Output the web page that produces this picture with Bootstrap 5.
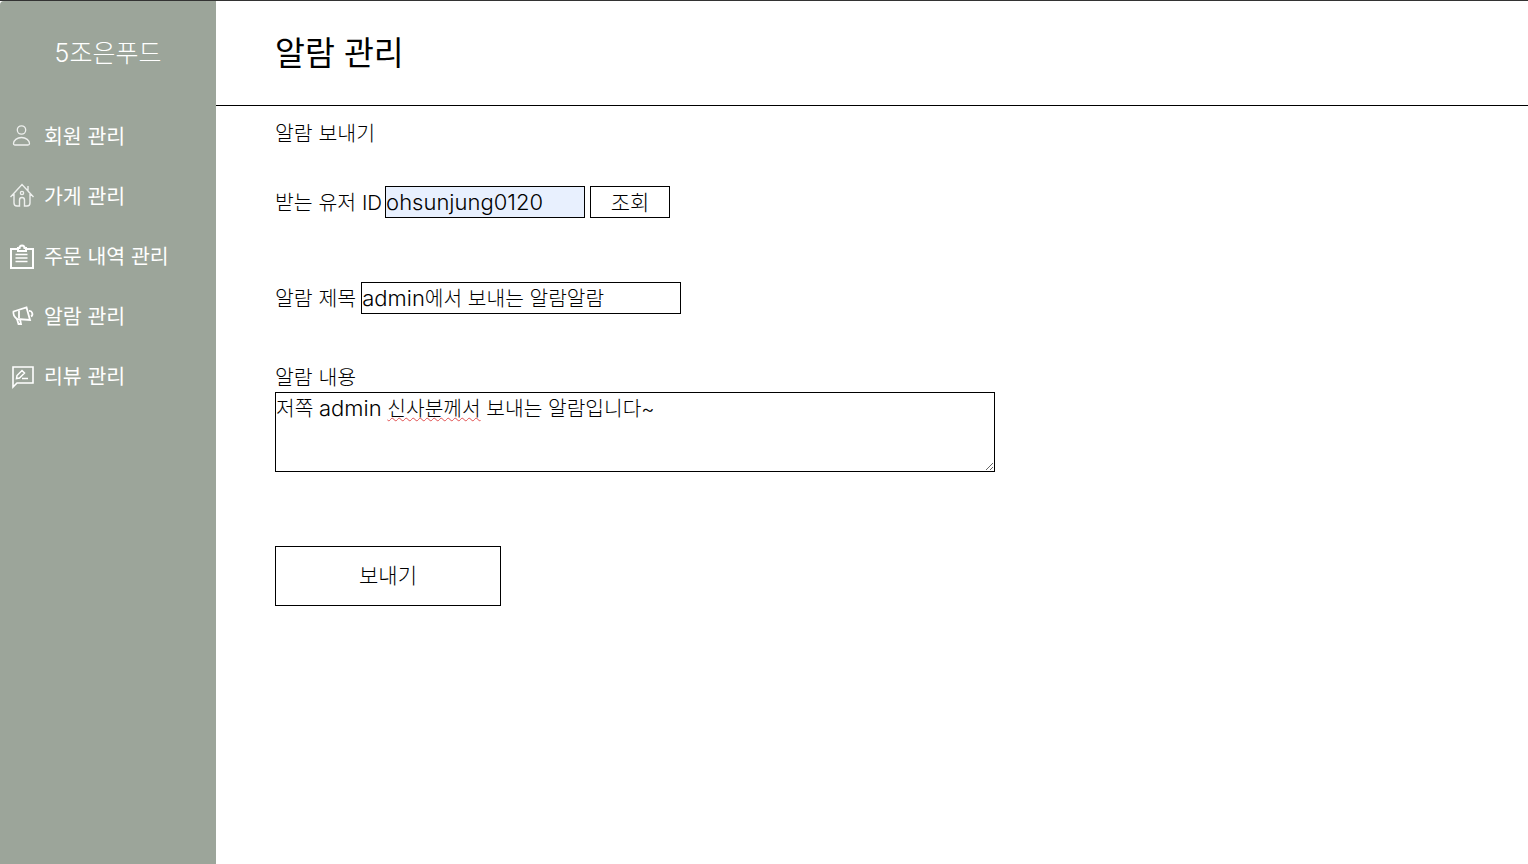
<!DOCTYPE html>
<html lang="ko">
<head>
<meta charset="utf-8">
<title>알람 관리</title>
<link href="https://cdn.jsdelivr.net/npm/bootstrap@5.3.0/dist/css/bootstrap.min.css" rel="stylesheet">
<style>
html,body{height:100%}
body{font-family:Inter,"Noto Sans CJK KR",sans-serif;color:#000;background:#fff;border-top:1px solid #333;overflow:hidden}
.app-shell{height:863px}
.side-panel{width:216px;background:#9ca59a;color:#fff;border-top-left-radius:4px;flex:none}
.brand-name{height:104px;font-size:25px;font-weight:300;line-height:104px;text-align:center}
.side-item{height:60px;font-size:20.5px;font-weight:400;padding-left:10px;gap:10px;color:#fff;text-decoration:none}
.side-item svg{width:24px;height:24px;flex:none;overflow:visible}
.side-text{padding-top:4px}
.top-head{height:105px;border-bottom:1px solid #000;padding-left:59px}
.top-head h1{font-size:32.5px;font-weight:400;margin:0}
.main-body{padding-left:59px}
.sec-title{font-size:20.5px;font-weight:300;line-height:24px;margin-top:16px}
.field-label{font-size:20.5px;font-weight:300;line-height:24px;padding-top:2px;margin-right:5px}
.label-tight{margin-right:3px}
.block-label{display:block;line-height:28px;padding-top:0;margin-top:50px;margin-right:0}
.plain-field{border:1px solid #000;border-radius:0;font-size:20.3px;font-weight:300;line-height:30px;height:32px;padding:0;color:#000;outline:0;background:#fff;white-space:nowrap;overflow:hidden}
.plain-field .lat{font-size:22px}
.id-field{width:200px;background:#e8f0fe}
.title-field{width:320px}
.plain-btn{border:1px solid #000;border-radius:0;background:#fff;color:#000;font-size:21px;font-weight:300;padding:0}
.look-btn{width:80px;height:32px;margin-left:5px}
.send-btn{width:226px;height:60px;margin-top:74px}
.msg-field{width:720px;height:80px;border:1px solid #000;font-size:20.3px;font-weight:300;line-height:30px;color:#000;outline:0;resize:both;overflow:auto}
.msg-field .lat{font-size:22px}
.spell-mark{text-decoration:underline wavy #e05050 1px}
.gap-row-a{margin-top:40px}
.gap-row-b{margin-top:64px}
</style>
</head>
<body>
<div class="app-shell d-flex">
  <nav class="side-panel d-flex flex-column">
    <div class="brand-name">5조은푸드</div>
    <a class="side-item d-flex align-items-center" href="#"><svg viewBox="0 0 24 24" fill="none" stroke="#eef0ee" stroke-width="1.3"><circle cx="11.500" cy="7" r="4.200"/><path d="M3.500 20.500c0-3 3.500-6 8-6s8 3 8 6c0 1-.5 1.500-1.500 1.500H5c-1 0-1.500-.5-1.500-1.500z"/></svg><span class="side-text">회원 관리</span></a>
    <a class="side-item d-flex align-items-center" href="#"><svg viewBox="0 0 24 24" fill="none" stroke="#eef0ee" stroke-width="1.400"><path d="M.5 14 12 1.500 23.500 14M18 7.500V3M4 11v9a3 3 0 0 0 3 3h2.500v-6a2.500 2.500 0 0 1 5 0v6H17a3 3 0 0 0 3-3v-9"/><circle cx="12" cy="10" r="1.600"/></svg><span class="side-text">가게 관리</span></a>
    <a class="side-item d-flex align-items-center" href="#"><svg viewBox="0 0 24 24" fill="none" stroke="#fff" stroke-width="2"><path d="M7 6H1v19h22V6h-6"/><path d="M8 8V5h1.500a2.500 2.500 0 0 1 5 0H16v3z"/><path stroke-width="1.500" d="M5.500 11.500h12M5.500 15h12M5.500 18.500h12"/></svg><span class="side-text">주문 내역 관리</span></a>
    <a class="side-item d-flex align-items-center" href="#"><svg viewBox="0 0 24 24" fill="none" stroke="#fff" stroke-width="1.800"><path d="M3.500 8.500 16.500 4.500 20 17 7 16C4.500 14 3 11 3.500 8.500z"/><path d="M9 7.500v7.500M7 16l1.500 5h2.500l-1-4.800M19 8a3 3 0 0 1 2 5.500"/></svg><span class="side-text">알람 관리</span></a>
    <a class="side-item d-flex align-items-center" href="#"><svg viewBox="0 0 24 24" fill="none" stroke="#fff" stroke-width="1.600"><path d="M3 4h20v16H7l-4 4z"/><path d="m6.500 15.500.5-3 5-5 2.500 2.500-5 5zM12 15.500h6" stroke-width="1.500"/></svg><span class="side-text">리뷰 관리</span></a>
  </nav>
  <div class="flex-grow-1">
    <header class="top-head d-flex align-items-center"><h1>알람 관리</h1></header>
    <main class="main-body">
      <div class="sec-title">알람 보내기</div>
      <div class="d-flex align-items-center gap-row-a">
        <label class="field-label label-tight">받는 유저 ID</label>
        <div class="plain-field id-field" role="textbox" contenteditable="true" spellcheck="false"><span class="lat">ohsunjung0120</span></div>
        <button type="button" class="plain-btn look-btn">조회</button>
      </div>
      <div class="d-flex align-items-center gap-row-b">
        <label class="field-label">알람 제목</label>
        <div class="plain-field title-field" role="textbox" contenteditable="true" spellcheck="false"><span class="lat">admin</span>에서 보내는 알람알람</div>
      </div>
      <label class="field-label block-label">알람 내용</label>
      <div class="msg-field" role="textbox" contenteditable="true" spellcheck="false">저쪽 <span class="lat">admin</span> <span class="spell-mark">신사분께서</span> 보내는 알람입니다~</div>
      <button type="button" class="plain-btn send-btn d-block">보내기</button>
    </main>
  </div>
</div>
<script src="https://cdn.jsdelivr.net/npm/bootstrap@5.3.0/dist/js/bootstrap.bundle.min.js"></script>
</body>
</html>
